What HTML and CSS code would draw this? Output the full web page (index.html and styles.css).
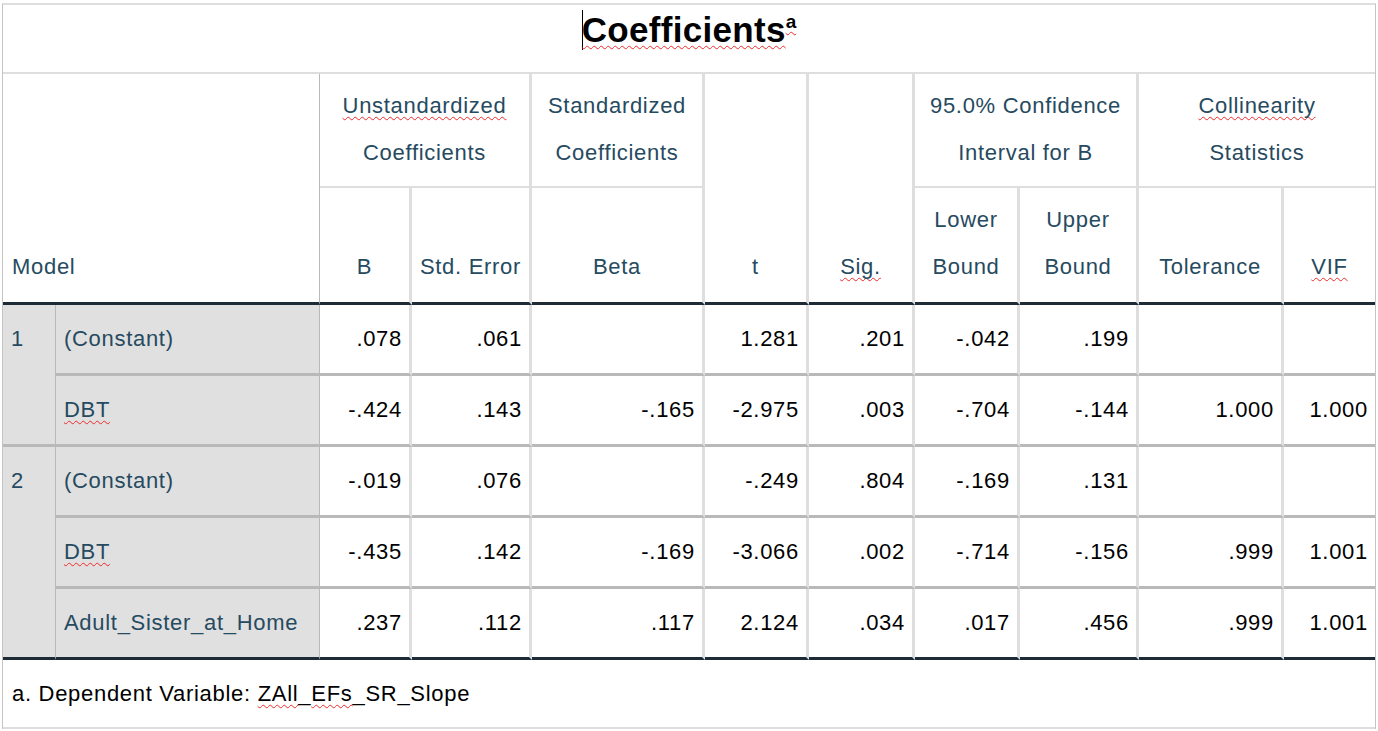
FILE: index.html
```html
<!DOCTYPE html>
<html lang="en">
<head>
<meta charset="utf-8">
<title>Coefficients</title>
<link rel="stylesheet" href="styles.css">
</head>
<body>
<div class="wrap">
<table class="coef">
  <colgroup>
    <col class="w1"><col class="w2"><col class="w3"><col class="w4"><col class="w5"><col class="w6">
    <col class="w7"><col class="w8"><col class="w9"><col class="w10"><col class="w11">
  </colgroup>
  <thead>
    <tr>
      <th colspan="11" class="title"><span class="caret"></span><span class="sp">Coefficients</span><sup class="sup sp">a</sup></th>
    </tr>
    <tr class="h1">
      <th colspan="2" rowspan="2" class="model">Model</th>
      <th colspan="2" class="grp"><span class="sp">Unstandardized</span><br>Coefficients</th>
      <th class="grp">Standardized<br>Coefficients</th>
      <th rowspan="2" class="single">t</th>
      <th rowspan="2" class="single"><span class="sp">Sig.</span></th>
      <th colspan="2" class="grp">95.0% Confidence<br>Interval for B</th>
      <th colspan="2" class="grp last"><span class="sp">Collinearity</span><br>Statistics</th>
    </tr>
    <tr class="h2">
      <th>B</th>
      <th>Std. Error</th>
      <th>Beta</th>
      <th>Lower<br>Bound</th>
      <th>Upper<br>Bound</th>
      <th>Tolerance</th>
      <th class="last"><span class="sp">VIF</span></th>
    </tr>
  </thead>
  <tbody>
    <tr>
      <td rowspan="2" class="mnum">1</td>
      <td class="lbl">(Constant)</td>
      <td class="n">.078</td>
      <td class="n">.061</td>
      <td class="n"></td>
      <td class="n">1.281</td>
      <td class="n">.201</td>
      <td class="n">-.042</td>
      <td class="n">.199</td>
      <td class="n"></td>
      <td class="n last"></td>
    </tr>
    <tr>
      <td class="lbl"><span class="sp">DBT</span></td>
      <td class="n">-.424</td>
      <td class="n">.143</td>
      <td class="n">-.165</td>
      <td class="n">-2.975</td>
      <td class="n">.003</td>
      <td class="n">-.704</td>
      <td class="n">-.144</td>
      <td class="n">1.000</td>
      <td class="n last">1.000</td>
    </tr>
    <tr>
      <td rowspan="3" class="mnum end">2</td>
      <td class="lbl">(Constant)</td>
      <td class="n">-.019</td>
      <td class="n">.076</td>
      <td class="n"></td>
      <td class="n">-.249</td>
      <td class="n">.804</td>
      <td class="n">-.169</td>
      <td class="n">.131</td>
      <td class="n"></td>
      <td class="n last"></td>
    </tr>
    <tr>
      <td class="lbl"><span class="sp">DBT</span></td>
      <td class="n">-.435</td>
      <td class="n">.142</td>
      <td class="n">-.169</td>
      <td class="n">-3.066</td>
      <td class="n">.002</td>
      <td class="n">-.714</td>
      <td class="n">-.156</td>
      <td class="n">.999</td>
      <td class="n last">1.001</td>
    </tr>
    <tr class="endrow">
      <td class="lbl">Adult_Sister_at_Home</td>
      <td class="n">.237</td>
      <td class="n">.112</td>
      <td class="n">.117</td>
      <td class="n">2.124</td>
      <td class="n">.034</td>
      <td class="n">.017</td>
      <td class="n">.456</td>
      <td class="n">.999</td>
      <td class="n last">1.001</td>
    </tr>
  </tbody>
  <tfoot>
    <tr>
      <td colspan="11" class="foot">a. Dependent Variable: <span class="sp">ZAll</span>_<span class="sp">EFs</span>_SR_Slope</td>
    </tr>
  </tfoot>
</table>
</div>
</body>
</html>
```

FILE: styles.css
```css
html, body {
  margin: 0;
  padding: 0;
  background: #ffffff;
}

body {
  font-family: "Liberation Sans", Arial, sans-serif;
}

.wrap {
  padding: 3px 0 0 2px;
}

.coef {
  border-collapse: separate;
  border-spacing: 0;
  table-layout: fixed;
  width: 1374px;
  border-left: 1px solid #c4c4c4;
  border-right: 1px solid #c4c4c4;
  border-top: 2px solid #dedede;
  font-size: 22px;
  letter-spacing: 0.7px;
}

.w1 { width: 53px; }
.w2 { width: 264px; }
.w3 { width: 92px; }
.w4 { width: 120px; }
.w5 { width: 173px; }
.w6 { width: 104px; }
.w7 { width: 106px; }
.w8 { width: 105px; }
.w9 { width: 119px; }
.w10 { width: 145px; }
.w11 { width: 91px; }

.coef th,
.coef td {
  box-sizing: border-box;
  padding: 0;
  white-space: nowrap;
}

/* spell-check squiggle */
.sp {
  text-decoration: underline wavy #ee2a2a;
  text-decoration-thickness: 1px;
  text-underline-offset: 3px;
  text-decoration-skip-ink: none;
}

/* title */
.coef th.title {
  text-align: center;
  font-size: 35px;
  font-weight: bold;
  letter-spacing: 0.3px;
  color: #000000;
  line-height: 40px;
  padding: 5px 0 22px;
  border-bottom: 2px solid #dedede;
}

.caret {
  display: inline-block;
  width: 1px;
  height: 40px;
  background: #000000;
  vertical-align: top;
  margin-right: -1px;
}

.sup {
  font-size: 19px;
  line-height: 0;
  vertical-align: 14px;
  letter-spacing: 0;
}

/* header rows */
.h1 th,
.h2 th {
  font-weight: normal;
  color: #264a60;
  line-height: 47px;
  vertical-align: bottom;
  text-align: center;
  padding-left: 4px;
  padding-right: 4px;
}

.h1 th {
  padding-top: 8px;
  padding-bottom: 10px;
}

.h2 th {
  padding-top: 8px;
  padding-bottom: 12px;
  border-right: 3px solid #dedede;
  border-bottom: 3px solid #1c2b36;
}

.h1 th.grp {
  border-right: 3px solid #dedede;
  border-bottom: 2px solid #dedede;
}

.h1 th.single {
  padding-bottom: 12px;
  border-right: 3px solid #dedede;
  border-bottom: 3px solid #1c2b36;
}

.h1 th.model {
  text-align: left;
  padding-left: 9px;
  padding-bottom: 12px;
  border-right: 1px solid #b9b9b9;
  border-bottom: 3px solid #1c2b36;
}

.coef th.last {
  border-right: 0;
}

/* body */
.coef tbody td {
  line-height: 47px;
  padding: 10px 7px 11px 8px;
  border-bottom: 3px solid #b9b9b9;
  vertical-align: middle;
}

.coef td.n {
  text-align: right;
  color: #000000;
  border-right: 3px solid #dedede;
}

.coef td.n.last {
  border-right: 0;
}

.coef td.mnum {
  background: #e0e0e0;
  color: #264a60;
  vertical-align: top;
  border-right: 1px solid #b9b9b9;
}

.coef td.lbl {
  background: #e0e0e0;
  color: #264a60;
  border-right: 1px solid #b9b9b9;
}

.coef td.mnum.end,
.coef .endrow td {
  border-bottom: 3px solid #1c2b36;
}

/* footnote */
.coef td.foot {
  line-height: 47px;
  padding: 10px 8px 10px 9px;
  color: #000000;
  text-align: left;
  border-bottom: 2px solid #dedede;
}
```
